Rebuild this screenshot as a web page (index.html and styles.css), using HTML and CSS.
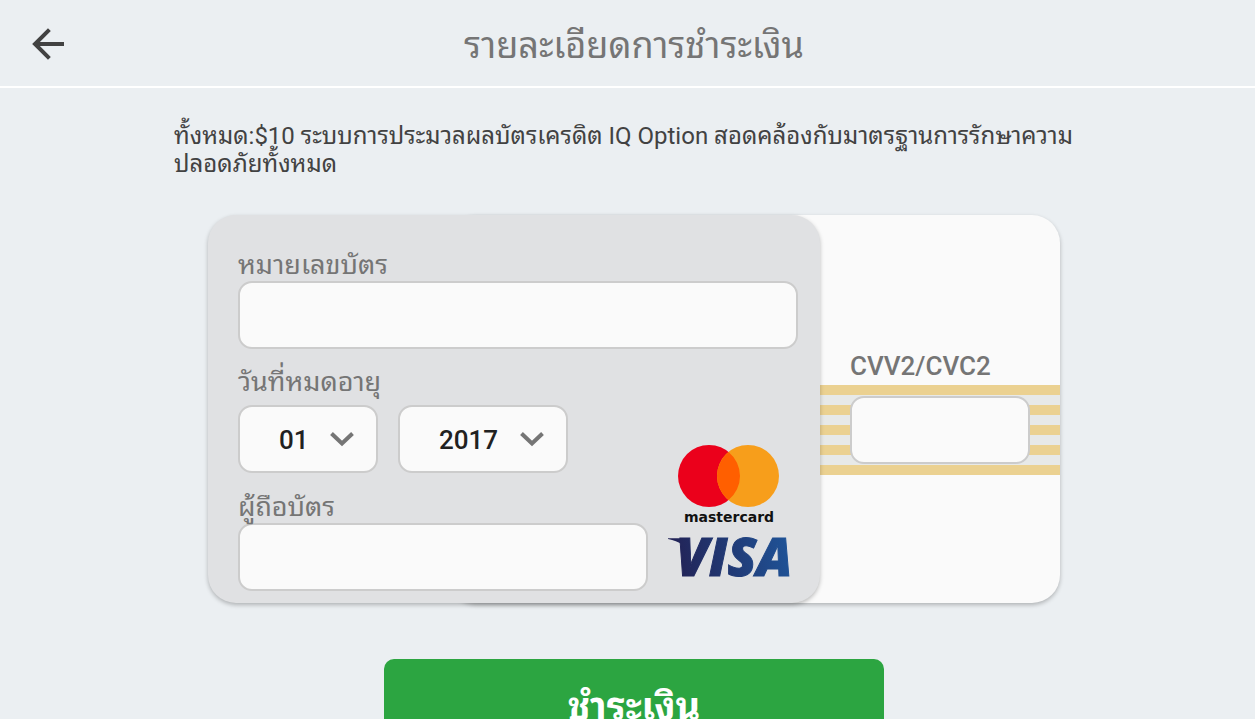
FILE: index.html
```html
<!DOCTYPE html>
<html lang="th">
<head>
<meta charset="utf-8">
<meta name="viewport" content="width=device-width, initial-scale=1">
<title>รายละเอียดการชำระเงิน</title>
<link rel="stylesheet" href="styles.css">
</head>
<body>
<header class="topbar">
  <button class="back" type="button" aria-label="กลับ">
    <svg width="32" height="32" viewBox="0 0 32 32" fill="none" stroke="currentColor" stroke-width="4"><path d="M32 16H3M17.400 1.600 3 16l14.400 14.400"/></svg>
  </button>
  <h1 class="title">รายละเอียดการชำระเงิน</h1>
</header>
<main class="content">
  <p class="intro">ทั้งหมด:$10 ระบบการประมวลผลบัตรเครดิต IQ Option สอดคล้องกับมาตรฐานการรักษาความปลอดภัยทั้งหมด</p>
  <form class="payment">
    <div class="cards">
      <section class="card card-back">
        <label class="label label-cvv" for="cvv">CVV2/CVC2</label>
        <div class="stripes"><input class="field" id="cvv" type="text"></div>
      </section>
      <section class="card card-front">
        <label class="label" for="number">หมายเลขบัตร</label>
        <input class="field" id="number" type="text">
        <div class="lower">
          <div class="details">
            <label class="label label-date" for="month">วันที่หมดอายุ</label>
            <div class="dates">
              <div class="picker picker-month">
                <select class="field select" id="month"><option>01</option></select>
                <svg class="chevron" width="24" height="16" viewBox="0 0 24 16" fill="none" stroke="currentColor" stroke-width="4"><path d="M1.500 2.500 12 12.500 22.500 2.500"/></svg>
              </div>
              <div class="picker picker-year">
                <select class="field select" id="year" aria-label="ปี"><option>2017</option></select>
                <svg class="chevron" width="24" height="16" viewBox="0 0 24 16" fill="none" stroke="currentColor" stroke-width="4"><path d="M1.500 2.500 12 12.500 22.500 2.500"/></svg>
              </div>
            </div>
            <label class="label label-holder" for="holder">ผู้ถือบัตร</label>
            <input class="field" id="holder" type="text">
          </div>
          <div class="brands">
            <svg width="102" height="84" viewBox="0 0 102 84" role="img" aria-label="mastercard">
              <circle cx="32" cy="31" r="31" fill="#eb001b"/>
              <circle cx="71" cy="31" r="31" fill="#f79e1b"/>
              <path d="M51.500 6.900a31 31 0 0 1 0 48.200a31 31 0 0 1 0-48.200z" fill="#ff5f00"/>
              <text class="mc-word" x="52" y="77" text-anchor="middle">mastercard</text>
            </svg>
            <svg class="visa" width="122" height="40" viewBox="0 0 122 40" role="img" aria-label="VISA">
              <defs><linearGradient id="visa-blue" gradientUnits="userSpaceOnUse" x1="10" y1="30" x2="122" y2="10"><stop offset="0" stop-color="#222357"/><stop offset="1" stop-color="#1f5397"/></linearGradient></defs>
              <path d="M1 1.200H17q4 0 5 4l2 14Q18 5 1 2z" fill="url(#visa-blue)"/>
              <text class="visa-word" x="9" y="39" fill="url(#visa-blue)" stroke="url(#visa-blue)">VISA</text>
            </svg>
          </div>
        </div>
      </section>
    </div>
    <button class="pay" type="submit">ชำระเงิน</button>
  </form>
</main>
</body>
</html>
```
FILE: styles.css
```css
* { box-sizing: border-box; }
body {
  margin: 0;
  background: #ebeff2;
  color: #424242;
  font-family: Roboto, "Noto Sans Thai Looped", "Noto Sans Thai", sans-serif;
}
button, input, select { font: inherit; }
.topbar {
  display: grid;
  grid-template-columns: 64px 1fr 51px;
  align-items: center;
  height: 88px;
  border-bottom: 2px solid #fff;
}
.back {
  margin: 2px 0 0 32px;
  padding: 0;
  width: 32px;
  height: 32px;
  border: 0;
  background: none;
  color: #424242;
}
.back svg, .brands svg, .chevron { display: block; }
.title {
  margin: 0;
  padding-top: 6px;
  text-align: center;
  font-size: 36px;
  line-height: 48px;
  font-weight: 400;
  color: #757575;
}
.content { padding: 34px 0 40px 13px; }
.intro {
  max-width: 920px;
  margin: 0 auto;
  font-size: 24px;
  line-height: 28px;
}
.payment {
  display: flex;
  flex-direction: column;
  align-items: center;
  gap: 56px;
  margin-top: 37px;
}
.cards {
  display: grid;
  grid-template-columns: 240px 372px 240px;
}
.card {
  grid-row: 1;
  border-radius: 28px;
  box-shadow: 0 2px 4px rgba(0, 0, 0, .25);
}
.card-front {
  grid-column: 1 / 3;
  padding: 34px 22px 12px 30px;
  background: #e0e1e3;
}
.card-back {
  grid-column: 2 / 4;
  padding-top: 135px;
  background: #fafafa;
}
.label {
  display: block;
  font-size: 27px;
  line-height: 32px;
  color: #757575;
}
.label-cvv {
  margin-left: 402px;
  padding-bottom: 3px;
  font-size: 26px;
  font-weight: 500;
}
.label-date { padding: 17px 0 7px; }
.label-holder { padding-top: 18px; }
.field {
  display: block;
  width: 100%;
  height: 68px;
  border: 2px solid #ccc;
  border-radius: 14px;
  background: #fafafa;
  color: #212121;
  padding: 0 16px;
}
.stripes {
  padding: 11px 30px 11px 402px;
  background: repeating-linear-gradient(#ebd191 0 10px, #e7e9e8 10px 20px);
}
.lower { display: flex; justify-content: space-between; }
.details { width: 410px; }
.dates { display: flex; gap: 20px; }
.picker { position: relative; }
.picker-month { width: 140px; }
.picker-year { width: 170px; }
.select {
  appearance: none;
  padding: 2px 0 0 39px;
  font-size: 26px;
  font-weight: 500;
}
.chevron {
  position: absolute;
  right: 24px;
  top: 26px;
  color: #757575;
  pointer-events: none;
}
.brands {
  display: flex;
  flex-direction: column;
  align-items: center;
  gap: 8px;
  padding: 96px 9px 0 0;
}
.visa { overflow: visible; }
.mc-word { font: 700 14px "DejaVu Sans", sans-serif; fill: #111; }
.visa-word { font: italic 800 53px "Open Sans", sans-serif; stroke-width: 1px; }
.pay {
  width: 500px;
  height: 92px;
  padding: 0 0 6px;
  border: 0;
  border-radius: 10px;
  background: #2ca541;
  color: #fff;
  font-size: 38px;
  font-weight: 700;
}
```
